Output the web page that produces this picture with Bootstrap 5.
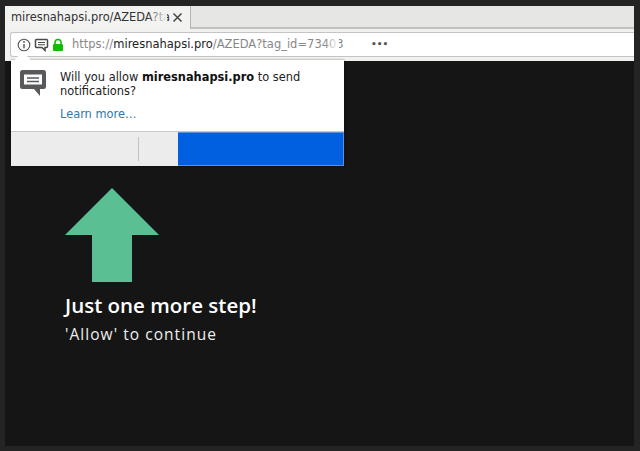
<!DOCTYPE html>
<html lang="en">
<head>
  <meta charset="UTF-8">
  <title>miresnahapsi.pro</title>
  <meta name="viewport" content="width=device-width, initial-scale=1">
  <link href="https://cdn.jsdelivr.net/npm/bootstrap@5.3.0/dist/css/bootstrap.min.css" rel="stylesheet">
  <style>
    html, body { height: 100%; }
    body { background: #242424; font-family: "DejaVu Sans", sans-serif; overflow: hidden; }
    .screen { width: 640px; height: 451px; padding: 6px 6px 5px 5px; }
    .browser { background: #151515; position: relative; }
    .tab-strip { height: 21px; background: #e6e6e4; flex: none; }
    .tab-item { width: 186px; height: 23px; background: #f2f2f1; border-right: 1px solid #b4b4b2; padding: 0 7px 0 6px; font-size: 11.4px; color: #333; z-index: 1; }
    .tab-title { width: 156px; white-space: nowrap; position: relative; }
    .tab-title::after { content: ""; position: absolute; right: 0; top: 0; bottom: 0; width: 20px; background: linear-gradient(to right, rgba(242,242,241,0), #f2f2f1); }
    .tool-bar { height: 34px; background: #f1f1f0; border-top: 2px solid #c2c2c0; padding: 3px 0 4px 5px; flex: none; }
    .url-box { height: 25px; background: #fff; border: 1px solid #c4c4c2; border-right: 0; border-radius: 3px 0 0 3px; padding-left: 6px; font-size: 11.5px; color: #888; }
    .ico-msg { margin-left: 3px; }
    .ico-lock { margin-left: 3px; }
    .url-text { width: 267px; margin-left: 8px; white-space: nowrap; position: relative; }
    .url-text b { font-weight: 400; color: #222; }
    .url-text::after { content: ""; position: absolute; right: 0; top: 0; bottom: 0; width: 14px; background: linear-gradient(to right, rgba(255,255,255,0), #fff); }
    .url-dots { margin-left: 32px; font-size: 9px; font-weight: 700; color: #555; line-height: 1; }
    .allow-pop { position: absolute; left: 6px; top: 54px; width: 333px; height: 106px; background: #fff; box-shadow: 0 0 2px rgba(0,0,0,.5); z-index: 5; }
    .allow-pop::before { content: ""; position: absolute; left: 6px; top: -6px; width: 11px; height: 11px; background: #fff; transform: rotate(45deg); }
    .pop-body { height: 71px; padding: 9px 8px 0 8px; }
    .pop-msg { font-size: 11.4px; line-height: 14px; color: #222; margin: 1px 0 0 13px; }
    .pop-msg b { color: #111; }
    .pop-link { display: block; margin-top: 9px; color: #2f78a8; text-decoration: none; }
    .pop-btns { height: 35px; border-top: 1px solid #c8c8c8; }
    .btn-later { width: 167px; background: #ececec; }
    .btn-sep { width: 1px; height: 24px; background: #c2c2c2; margin: 5px 0 0 127px; }
    .btn-allow { flex: 1; background: #0060df; border: 1px solid #5b8fd6; border-left: 0; border-radius: 0; }
    .page-main { padding: 127px 0 0 60px; color: #fff; font-family: "Open Sans", sans-serif; }
    .up-arrow { display: block; width: 94px; height: 94px; margin-bottom: 10px; }
    .step-title { font-size: 20.500px; font-weight: 600; line-height: 27px; margin: 0 0 5px; }
    .step-sub { font-size: 15.500px; letter-spacing: 1.050px; line-height: 20px; color: #eee; margin: 0; }
  </style>
</head>
<body>
  <div class="screen">
    <div class="browser h-100 d-flex flex-column">

      <!-- tabs -->
      <div class="tab-strip d-flex">
        <div class="tab-item d-flex align-items-center justify-content-between">
          <span class="tab-title">miresnahapsi.pro/AZEDA?ta</span>
          <svg width="11" height="11" viewBox="0 0 11 11"><path d="M1.5 1.5l8 8M9.5 1.5l-8 8" stroke="#444" stroke-width="1.5"/></svg>
        </div>
      </div>

      <!-- url bar -->
      <div class="tool-bar">
        <div class="url-box d-flex align-items-center">
          <svg width="14" height="14" viewBox="0 0 14 14"><circle cx="7" cy="7" r="5.8" fill="none" stroke="#555" stroke-width="1.1"/><path d="M7 6v4.2" stroke="#555" stroke-width="1.4"/><circle cx="7" cy="4" r=".9" fill="#555"/></svg>
          <svg class="ico-msg" width="15" height="14" viewBox="0 0 15 14"><path d="M2.5 1.5h10a1 1 0 0 1 1 1v6a1 1 0 0 1-1 1H11v3L8 9.500H2.500a1 1 0 0 1-1-1v-6a1 1 0 0 1 1-1z" fill="#fff" stroke="#4a4a4a" stroke-width="1.500"/><path d="M4 4.500h7M4 6.800h7" stroke="#4a4a4a" stroke-width="1.100"/></svg>
          <svg class="ico-lock" width="12" height="14" viewBox="0 0 12 14"><path d="M3 6V4.500a3 3 0 0 1 6 0V6" fill="none" stroke="#12bc00" stroke-width="1.600"/><rect x="1" y="6" width="10" height="7" rx="1" fill="#12bc00"/></svg>
          <span class="url-text">https://<b>miresnahapsi.pro</b>/AZEDA?tag_id=73403</span>
          <span class="url-dots">•••</span>
        </div>
      </div>

      <!-- notification prompt -->
      <div class="allow-pop">
        <div class="pop-body d-flex">
          <svg class="flex-shrink-0" width="28" height="28" viewBox="0 0 28 28"><path d="M3.500 1h21A2.500 2.500 0 0 1 27 3.500v14a2.500 2.500 0 0 1-2.500 2.500H21v7l-6-7H3.500A2.500 2.500 0 0 1 1 17.500v-14A2.500 2.500 0 0 1 3.500 1z" fill="#58595b"/><path d="M5 5.500h18v10H5z" fill="#fff"/><path d="M8 9h12M8 12.500h12" stroke="#58595b" stroke-width="1.500"/></svg>
          <div class="pop-msg">
            Will you allow <b>miresnahapsi.pro</b> to send notifications?
            <a class="pop-link" href="#">Learn more…</a>
          </div>
        </div>
        <div class="pop-btns d-flex">
          <div class="btn-later"><div class="btn-sep"></div></div>
          <div class="btn-allow"></div>
        </div>
      </div>

      <!-- page -->
      <div class="page-main flex-grow-1">
        <svg class="up-arrow" viewBox="0 0 94 94"><path d="M47 0l47 47H67v47H27V47H0z" fill="#5ac094"/></svg>
        <h1 class="step-title">Just one more step!</h1>
        <p class="step-sub">'Allow' to continue</p>
      </div>
    </div>
  </div>
  <script src="https://cdn.jsdelivr.net/npm/bootstrap@5.3.0/dist/js/bootstrap.bundle.min.js"></script>
</body>
</html>
